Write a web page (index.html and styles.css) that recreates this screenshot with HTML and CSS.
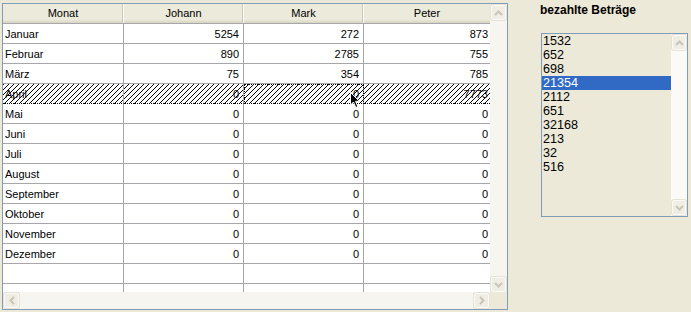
FILE: index.html
```html
<!DOCTYPE html>
<html>
<head>
<meta charset="utf-8">
<link rel="stylesheet" href="styles.css">
</head>
<body>
<div class="window">
  <div class="grid-frame">
    <div class="viewport">
      <div class="row header">
        <div class="hcell">Monat</div>
        <div class="hcell">Johann</div>
        <div class="hcell">Mark</div>
        <div class="hcell last">Peter</div>
      </div>
      <div class="row"><div class="cell txt">Januar</div><div class="cell">5254</div><div class="cell">272</div><div class="cell last">873</div></div>
      <div class="row"><div class="cell txt">Februar</div><div class="cell">890</div><div class="cell">2785</div><div class="cell last">755</div></div>
      <div class="row"><div class="cell txt">März</div><div class="cell">75</div><div class="cell">354</div><div class="cell last">785</div></div>
      <div class="row hatched"><div class="cell txt">April</div><div class="cell">0</div><div class="cell focus">0</div><div class="cell last">7773</div></div>
      <div class="row"><div class="cell txt">Mai</div><div class="cell">0</div><div class="cell">0</div><div class="cell last">0</div></div>
      <div class="row"><div class="cell txt">Juni</div><div class="cell">0</div><div class="cell">0</div><div class="cell last">0</div></div>
      <div class="row"><div class="cell txt">Juli</div><div class="cell">0</div><div class="cell">0</div><div class="cell last">0</div></div>
      <div class="row"><div class="cell txt">August</div><div class="cell">0</div><div class="cell">0</div><div class="cell last">0</div></div>
      <div class="row"><div class="cell txt">September</div><div class="cell">0</div><div class="cell">0</div><div class="cell last">0</div></div>
      <div class="row"><div class="cell txt">Oktober</div><div class="cell">0</div><div class="cell">0</div><div class="cell last">0</div></div>
      <div class="row"><div class="cell txt">November</div><div class="cell">0</div><div class="cell">0</div><div class="cell last">0</div></div>
      <div class="row"><div class="cell txt">Dezember</div><div class="cell">0</div><div class="cell">0</div><div class="cell last">0</div></div>
      <div class="row"><div class="cell txt"></div><div class="cell"></div><div class="cell"></div><div class="cell last"></div></div>
      <div class="row"><div class="cell txt"></div><div class="cell"></div><div class="cell"></div><div class="cell last"></div></div>
    </div>
    <div class="vscroll">
      <div class="sbtn"><svg width="9" height="6" viewBox="0 0 9 6"><path d="M1 5 L4.5 1.5 L8 5" fill="none" stroke="#c9c6b6" stroke-width="2"/></svg></div>
      <div class="track"></div>
      <div class="sbtn"><svg width="9" height="6" viewBox="0 0 9 6"><path d="M1 1 L4.5 4.5 L8 1" fill="none" stroke="#c9c6b6" stroke-width="2"/></svg></div>
    </div>
    <div class="hscroll">
      <div class="sbtn"><svg width="6" height="9" viewBox="0 0 6 9"><path d="M5 1 L1.5 4.5 L5 8" fill="none" stroke="#c9c6b6" stroke-width="2"/></svg></div>
      <div class="track"></div>
      <div class="sbtn"><svg width="6" height="9" viewBox="0 0 6 9"><path d="M1 1 L4.5 4.5 L1 8" fill="none" stroke="#c9c6b6" stroke-width="2"/></svg></div>
    </div>
    <div class="corner"></div>
  </div>

  <div class="side">
    <div class="label">bezahlte Beträge</div>
    <div class="listbox">
      <div class="items">
        <div class="item">1532</div>
        <div class="item">652</div>
        <div class="item">698</div>
        <div class="item selected">21354</div>
        <div class="item">2112</div>
        <div class="item">651</div>
        <div class="item">32168</div>
        <div class="item">213</div>
        <div class="item">32</div>
        <div class="item">516</div>
      </div>
      <div class="vscroll lb">
        <div class="sbtn"><svg width="9" height="6" viewBox="0 0 9 6"><path d="M1 5 L4.5 1.5 L8 5" fill="none" stroke="#c9c6b6" stroke-width="2"/></svg></div>
        <div class="track"></div>
        <div class="sbtn"><svg width="9" height="6" viewBox="0 0 9 6"><path d="M1 1 L4.5 4.5 L8 1" fill="none" stroke="#c9c6b6" stroke-width="2"/></svg></div>
      </div>
    </div>
  </div>

  <svg class="cursor" width="12" height="17" viewBox="0 0 12 17"><path d="M0.5 0.5 L0.5 13 L3.5 10 L5.8 15.5 L7.8 14.6 L5.6 9.3 L9.5 9.3 Z" fill="#000" stroke="#fff" stroke-width="1"/></svg>
</div>
</body>
</html>
```

FILE: styles.css
```css
html, body {
  margin: 0;
  padding: 0;
  background: #ece9d8;
}

body {
  font-family: "Liberation Sans", Arial, sans-serif;
  font-size: 11px;
  color: #000;
}

.window {
  position: relative;
  width: 691px;
  height: 312px;
  display: flex;
  align-items: flex-start;
  overflow: hidden;
}

.grid-frame {
  margin-left: 2px;
  margin-top: 3px;
  width: 504px;
  height: 305px;
  border: 1px solid #7f9db9;
  display: grid;
  grid-template-columns: 487px 17px;
  grid-template-rows: 288px 17px;
  background: #ece9d8;
}

.viewport {
  background: #fff;
  overflow: hidden;
}

.row {
  display: grid;
  grid-template-columns: 121px 120px 120px 126px;
  height: 20px;
}

.header {
  background: linear-gradient(#ebeadb, #ebeadb 16px, #e2dfcf 17px, #d9d5c5 19px);
  border-bottom: 1px solid #a7a6aa;
  height: 19px;
}

.hcell {
  display: flex;
  align-items: center;
  justify-content: center;
  padding-bottom: 1px;
  border-right: 1px solid #fff;
  box-shadow: inset -1px 0 0 #cbc7b8;
  line-height: 13px;
}

.hcell.last {
  border-right: none;
  box-shadow: none;
}

.cell {
  display: flex;
  align-items: center;
  justify-content: flex-end;
  padding: 0 4px 0 2px;
  height: 19px;
  border-right: 1px solid #a7a6aa;
  border-bottom: 1px solid #a7a6aa;
  overflow: hidden;
  white-space: nowrap;
}

.cell.txt {
  justify-content: flex-start;
}

.cell.last {
  border-right: none;
  padding-right: 2px;
}

.hatched {
  background: repeating-linear-gradient(135deg, #000 0, #000 0.7px, #fff 0.9px, #fff 3.54px);
}

.hatched .cell {
  border-bottom: 1px dotted #000;
}

.focus {
  outline: 1px dotted #000;
  outline-offset: -1px;
}

.vscroll {
  display: flex;
  flex-direction: column;
  background: #f6f5ef;
}

.vscroll .track {
  flex: 1;
}

.hscroll {
  display: flex;
  background: #f6f5ef;
}

.hscroll .track {
  flex: 1;
}

.sbtn {
  width: 15px;
  height: 15px;
  margin: 1px;
  box-sizing: border-box;
  border: 1px solid #fbfaf6;
  background: #efede4;
  border-radius: 2px;
  display: flex;
  align-items: center;
  justify-content: center;
  box-shadow: 0 0 0 1px #e6e3d6;
}

.vscroll .sbtn {
  margin: 1px 1px 0 1px;
}

.corner {
  background: #ece9d8;
}

.side {
  margin-left: 32px;
  padding-top: 3px;
  display: flex;
  flex-direction: column;
}

.label {
  font-weight: bold;
  font-size: 12px;
  line-height: 14px;
  margin-left: 0;
}

.listbox {
  margin-top: 16px;
  margin-left: 1px;
  width: 145px;
  height: 182px;
  border: 1px solid #7f9db9;
  display: flex;
  background: #ece9d8;
}

.items {
  flex: 1;
  font-size: 12.6px;
}

.item {
  height: 14px;
  line-height: 14px;
  padding-left: 1px;
}

.item.selected {
  background: #316ac5;
  color: #fff;
}

.vscroll.lb {
  width: 16px;
  background: #fbfaf7;
}

.vscroll.lb .sbtn {
  margin: 1px 1px 1px 1px;
  width: 14px;
}

.cursor {
  position: absolute;
  left: 350px;
  top: 92px;
}
```
